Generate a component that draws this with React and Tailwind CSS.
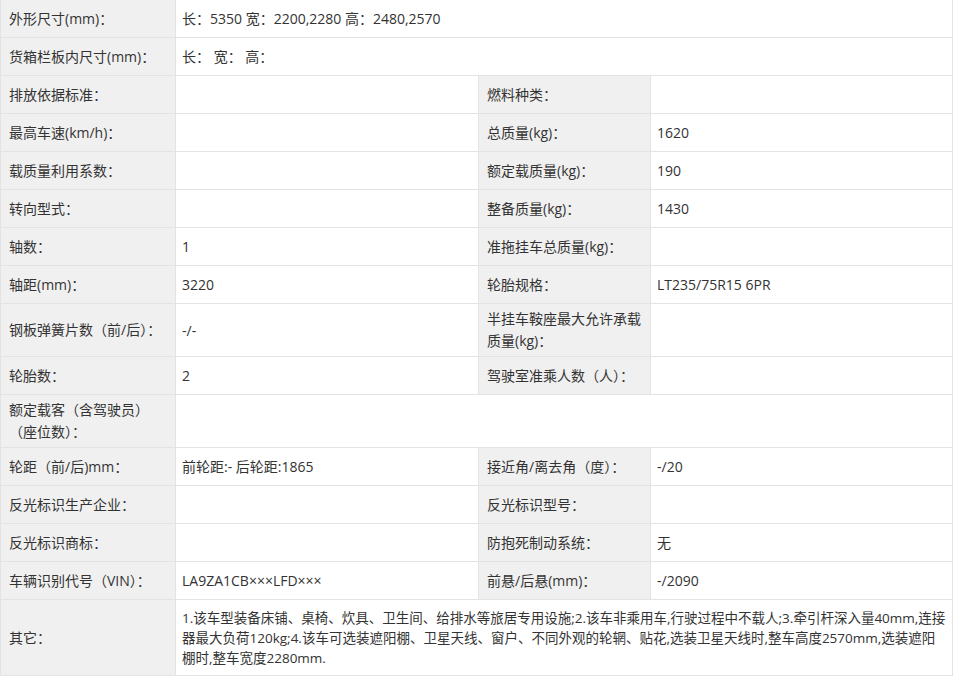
const rows = [
  { span: ["外形尺寸(mm)：", "长：5350 宽：2200,2280 高：2480,2570"] },
  { span: ["货箱栏板内尺寸(mm)：", "长：  宽：  高："] },
  { c: ["排放依据标准：", "", "燃料种类：", ""] },
  { c: ["最高车速(km/h)：", "", "总质量(kg)：", "1620"] },
  { c: ["载质量利用系数：", "", "额定载质量(kg)：", "190"] },
  { c: ["转向型式：", "", "整备质量(kg)：", "1430"] },
  { c: ["轴数：", "1", "准拖挂车总质量(kg)：", ""] },
  { c: ["轴距(mm)：", "3220", "轮胎规格：", "LT235/75R15 6PR"] },
  { c: ["钢板弹簧片数（前/后）：", "-/-", "半挂车鞍座最大允许承载质量(kg)：", ""], h: "h-[53px]" },
  { c: ["轮胎数：", "2", "驾驶室准乘人数（人）：", ""] },
  { span: ["额定载客（含驾驶员）（座位数）：", ""], h: "h-[53px]" },
  { c: ["轮距（前/后)mm：", "前轮距:- 后轮距:1865", "接近角/离去角（度）：", "-/20"] },
  { c: ["反光标识生产企业：", "", "反光标识型号：", ""] },
  { c: ["反光标识商标：", "", "防抱死制动系统：", "无"] },
  { c: ["车辆识别代号（VIN）：", "LA9ZA1CB×××LFD×××", "前悬/后悬(mm)：", "-/2090"] },
  { span: ["其它：", "1.该车型装备床铺、桌椅、炊具、卫生间、给排水等旅居专用设施;2.该车非乘用车,行驶过程中不载人;3.牵引杆深入量40mm,连接器最大负荷120kg;4.该车可选装遮阳棚、卫星天线、窗户、不同外观的轮辋、贴花,选装卫星天线时,整车高度2570mm,选装遮阳棚时,整车宽度2280mm."], h: "h-[76px]", tight: true },
];
const lab = "bg-[#f0f0f0] border border-[#e3e3e3] px-[8px] align-middle";
const val = "bg-white border border-[#e3e3e3] px-[6px] align-middle";
export default function App() {
  return (
    <div className="bg-white w-[957px] h-[679px] overflow-hidden text-[14px] text-[#333]" style={{ fontFamily: '"Open Sans","Noto Sans CJK SC",sans-serif' }}>
      <table className="border-collapse w-[953px] table-fixed -mt-px">
        <colgroup><col className="w-[175px]" /><col className="w-[303px]" /><col className="w-[172px]" /><col /></colgroup>
        <tbody>
          {rows.map((r, i) => (
            <tr key={i} className={r.h || "h-[38px]"}>
              {r.span ? (
                <>
                  <td className={lab + " leading-[22px]"}>{r.span[0]}</td>
                  <td colSpan={3} className={val + (r.tight ? " leading-[20px] text-[13.5px]" : "")}>{r.span[1]}</td>
                </>
              ) : (
                <>
                  <td className={lab + " leading-[22px]"}>{r.c[0]}</td>
                  <td className={val}>{r.c[1]}</td>
                  <td className={lab + " leading-[22px]"}>{r.c[2]}</td>
                  <td className={val}>{r.c[3]}</td>
                </>
              )}
            </tr>
          ))}
        </tbody>
      </table>
    </div>
  );
}
